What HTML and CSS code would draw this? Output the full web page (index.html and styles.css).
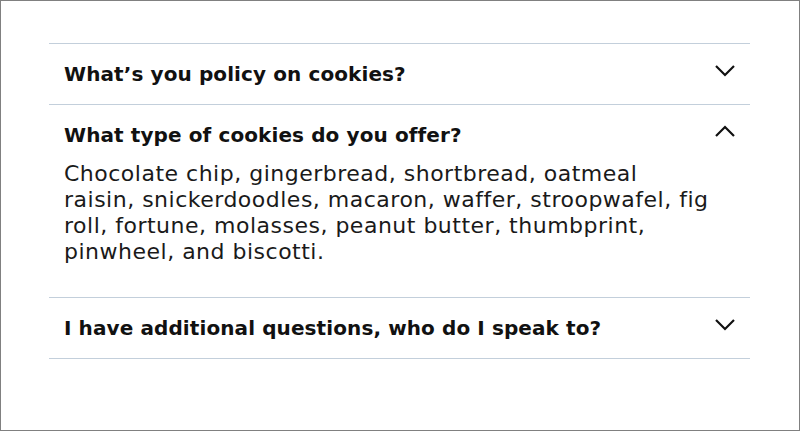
FILE: index.html
```html
<!DOCTYPE html>
<html lang="en">
<head>
<meta charset="utf-8">
<title>FAQ</title>
<link rel="stylesheet" href="styles.css">
</head>
<body>
<div class="frame">
  <div class="faq">
    <div class="item">
      <div class="head">
        <span class="q">What’s you policy on cookies?</span>
        <svg class="chev" width="22" height="14" viewBox="0 0 22 14"><polyline points="2,3 11,12 20,3"/></svg>
      </div>
    </div>
    <div class="item open">
      <div class="head">
        <span class="q">What type of cookies do you offer?</span>
        <svg class="chev" width="22" height="14" viewBox="0 0 22 14"><polyline points="2,12 11,3 20,12"/></svg>
      </div>
      <p class="answer">Chocolate chip, gingerbread, shortbread, oatmeal raisin, snickerdoodles, macaron, waffer, stroopwafel, fig roll, fortune, molasses, peanut butter, thumbprint, pinwheel, and biscotti.</p>
    </div>
    <div class="item">
      <div class="head">
        <span class="q">I have additional questions, who do I speak to?</span>
        <svg class="chev" width="22" height="14" viewBox="0 0 22 14"><polyline points="2,3 11,12 20,3"/></svg>
      </div>
    </div>
  </div>
</div>
</body>
</html>
```
FILE: styles.css
```css
html, body {
  margin: 0;
  padding: 0;
  background: #fff;
}
.frame {
  box-sizing: border-box;
  width: 800px;
  height: 431px;
  border: 1px solid #808080;
  padding: 42px 49px 0 48px;
  font-family: "DejaVu Sans", sans-serif;
  color: #111;
}
.item {
  border-top: 1px solid #c3cfdb;
}
.item:last-child {
  border-bottom: 1px solid #c3cfdb;
}
.head {
  display: flex;
  justify-content: space-between;
  align-items: flex-start;
  padding: 18px 14px 18px 15px;
}
.open .head {
  padding-bottom: 14px;
}
.q {
  font-size: 20px;
  line-height: 24px;
  font-weight: 700;
  letter-spacing: 0.1px;
}
.chev {
  flex: none;
  margin-top: 1px;
  fill: none;
  stroke: #111;
  stroke-width: 2.2;
}
.answer {
  margin: 0;
  padding: 0 0 32px 15px;
  font-size: 22px;
  line-height: 26px;
  letter-spacing: 0.5px;
  color: #1a1a1a;
  max-width: 650px;
}
```
